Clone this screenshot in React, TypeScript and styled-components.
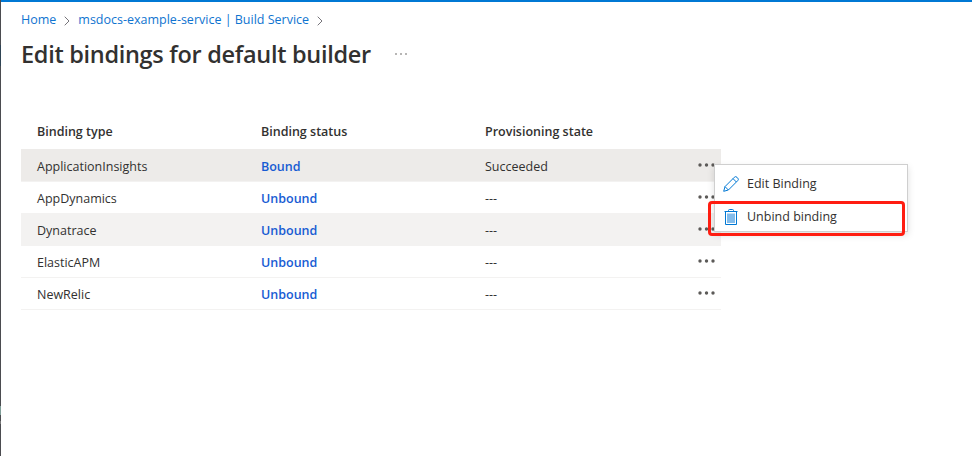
import React from "react";
import styled, { createGlobalStyle } from "styled-components";

const GlobalStyle = createGlobalStyle`
  * { box-sizing: border-box; }
  body {
    margin: 0;
    background: #fff;
    color: #323130;
    font: 400 13px/20px "Open Sans", "Noto Sans", sans-serif;
    overflow: hidden;
  }
`;

const Page = styled.div`
  width: 972px;
  height: 456px;
  display: grid;
  grid-template-columns: 1px 1fr;
`;

const Edge = styled.div`
  background: linear-gradient(#4b4c50 0 45px, #2f4454 45px 66px, #4b4c50 66px 406px, #7f9e98 406px 415px, #4b4c50 415px 421px, #777 421px 424px, #4b4c50 424px);
`;

const Blade = styled.main`
  border-top: 2px solid #0078d4;
  padding-left: 20px;
`;

const Breadcrumb = styled.nav`
  display: flex;
  align-items: center;
  height: 20px;
  margin-top: 8px;
`;

const Crumb = styled.a<{ $track: number }>`
  color: #0f74d0;
  font-size: 12.5px;
  white-space: pre;
  letter-spacing: ${(p) => p.$track}px;
`;

const Chevron = styled.svg`
  flex: none;
  width: 6px;
  height: 10px;
  margin: 1px 8px 0 8px;
  fill: none;
  stroke: #76747a;
`;

const TitleBar = styled.header`
  display: flex;
  align-items: center;
  height: 34px;
  margin-top: 7px;
`;

const Title = styled.h1`
  margin: 0;
  width: 374px;
  font-size: 23.5px;
  line-height: 34px;
  font-weight: 600;
  letter-spacing: -0.3px;
  white-space: nowrap;
`;

const Dots = styled.svg`
  display: block;
  fill: #5c5a58;
`;

const Table = styled.section`
  position: relative;
  width: 700px;
  margin-top: 43px;
`;

const Row = styled.div<{ $bg?: string }>`
  display: grid;
  grid-template-columns: 224px 224px 212px 1fr;
  align-items: center;
  height: 32px;
  padding: 3px 0 0 16px;
  border-bottom: 1px solid #f3f2f1;
  background: ${(p) => p.$bg ?? "#fff"};
`;

const HeadRow = styled(Row)`
  height: 36px;
  padding: 0 0 0 16px;
  border-bottom-color: #edebe9;
`;

const Cell = styled.span<{ $track?: number }>`
  font-size: 12.5px;
  white-space: nowrap;
  letter-spacing: ${(p) => p.$track ?? 0}px;
`;

const HeadCell = styled(Cell)`
  font-weight: 600;
`;

const StatusLink = styled(Cell)`
  color: #175bd3;
  font-weight: 600;
`;

const RowMenuDots = styled(Dots)`
  margin: -4px 0 0 1px;
`;

const Menu = styled.div`
  position: absolute;
  left: 693px;
  top: 50px;
  width: 194px;
  height: 68px;
  padding-top: 2px;
  background: #fff;
  border: 1px solid #cfcfcf;
  box-shadow: 0 3px 7px rgba(0, 0, 0, 0.13);
`;

const MenuItem = styled.div`
  display: flex;
  align-items: center;
  gap: 8px;
  height: 33px;
  padding-left: 8px;
`;

const MenuIcon = styled.svg`
  width: 16px;
  height: 16px;
  fill: none;
  stroke: #0078d4;
`;

const Highlight = styled.div`
  position: absolute;
  left: 687px;
  top: 87px;
  width: 197px;
  height: 35px;
  border: 3px solid #ff1d11;
  border-radius: 4px;
`;

const bindings = [
  { name: "ApplicationInsights", track: 0, status: "Bound", state: "Succeeded", bg: "#edebe9" },
  { name: "AppDynamics", track: 0, status: "Unbound", state: "---" },
  { name: "Dynatrace", track: 0, status: "Unbound", state: "---", bg: "#f3f2f1" },
  { name: "ElasticAPM", track: 0, status: "Unbound", state: "---" },
  { name: "NewRelic", track: 0, status: "Unbound", state: "---" },
];

const BreadcrumbChevron = () => (
  <Chevron viewBox="0 0 6 10"><path d="M.7.7 5 5 .7 9.3" /></Chevron>
);

export default function App() {
  return (
    <>
      <GlobalStyle />
      <Page>
        <Edge />
        <Blade>
          <Breadcrumb>
            <Crumb $track={0}>Home</Crumb>
            <BreadcrumbChevron />
            <Crumb $track={0}>msdocs-example-service | Build Service</Crumb>
            <BreadcrumbChevron />
          </Breadcrumb>
          <TitleBar>
            <Title>Edit bindings for default builder</Title>
            <Dots width="12" height="4" viewBox="0 0 12 4">
              <circle cx="1" cy="2" r=".8" /><circle cx="6" cy="2" r=".8" /><circle cx="11" cy="2" r=".8" />
            </Dots>
          </TitleBar>
          <Table>
            <HeadRow>
              <HeadCell>Binding type</HeadCell>
              <HeadCell>Binding status</HeadCell>
              <HeadCell>Provisioning state</HeadCell>
            </HeadRow>
            {bindings.map((b) => (
              <Row key={b.name} $bg={b.bg}>
                <Cell $track={b.track}>{b.name}</Cell>
                <StatusLink>{b.status}</StatusLink>
                <Cell>{b.state}</Cell>
                <RowMenuDots width="18" height="4" viewBox="0 0 18 4">
                  <circle cx="2" cy="2" r="1.7" /><circle cx="8.5" cy="2" r="1.7" /><circle cx="15" cy="2" r="1.7" />
                </RowMenuDots>
              </Row>
            ))}
            <Menu>
              <MenuItem>
                <MenuIcon viewBox="0 0 16 16">
                  <path d="M.7 15.3 2 10.6 11.3 1.3a1.9 1.9 0 0 1 2.7 0l.7.7a1.9 1.9 0 0 1 0 2.7L5.4 14z M2 10.6 5.4 14 M10 2.6 13.4 6" />
                </MenuIcon>
                <Cell>Edit Binding</Cell>
              </MenuItem>
              <MenuItem>
                <MenuIcon viewBox="0 0 16 16">
                  <path d="M1.5 2.5h13M5.5 2.5v-1q0-1 1-1h3q1 0 1 1v1M2.5 2.5v13h11v-13" />
                  <path d="M4 4.5h8V14H4z" fill="#83bceb" stroke="none" />
                </MenuIcon>
                <Cell>Unbind binding</Cell>
              </MenuItem>
            </Menu>
            <Highlight />
          </Table>
        </Blade>
      </Page>
    </>
  );
}
